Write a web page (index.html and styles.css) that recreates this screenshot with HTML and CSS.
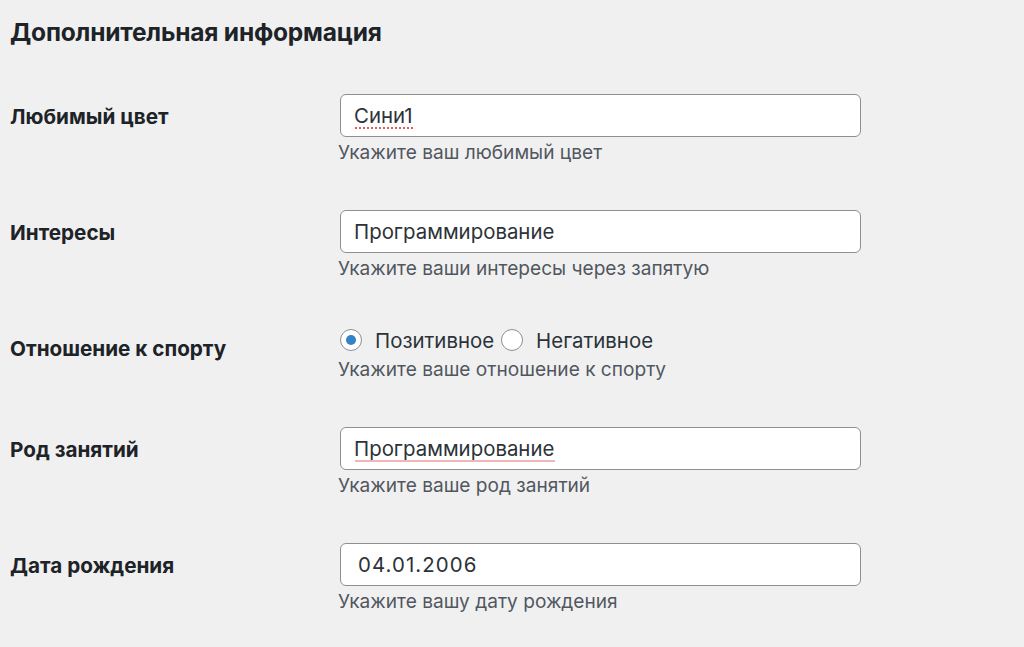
FILE: index.html
```html
<!DOCTYPE html>
<html lang="ru">
<head>
<meta charset="utf-8">
<title>Дополнительная информация</title>
<link rel="stylesheet" href="styles.css">
</head>
<body>
<h2 class="title">Дополнительная информация</h2>
<div class="form">
  <div class="row">
    <label class="label" for="color">Любимый цвет</label>
    <div class="field">
      <div class="input-wrap">
        <input class="text" id="color" type="text" value="Сини1">
        <span class="spell spell-dotted" aria-hidden="true">Сини1</span>
      </div>
      <p class="desc">Укажите ваш любимый цвет</p>
    </div>
  </div>
  <div class="row">
    <label class="label" for="interests">Интересы</label>
    <div class="field">
      <input class="text" id="interests" type="text" value="Программирование">
      <p class="desc">Укажите ваши интересы через запятую</p>
    </div>
  </div>
  <div class="row">
    <span class="label">Отношение к спорту</span>
    <div class="field">
      <div class="radios">
        <label class="radio"><input type="radio" name="sport" checked><span>Позитивное</span></label>
        <label class="radio"><input type="radio" name="sport"><span>Негативное</span></label>
      </div>
      <p class="desc">Укажите ваше отношение к спорту</p>
    </div>
  </div>
  <div class="row">
    <label class="label" for="job">Род занятий</label>
    <div class="field">
      <div class="input-wrap">
        <input class="text" id="job" type="text" value="Программирование">
        <span class="spell spell-soft" aria-hidden="true">Программирование</span>
      </div>
      <p class="desc">Укажите ваше род занятий</p>
    </div>
  </div>
  <div class="row">
    <label class="label" for="birth">Дата рождения</label>
    <div class="field">
      <input class="text date" id="birth" type="text" value="04.01.2006">
      <p class="desc">Укажите вашу дату рождения</p>
    </div>
  </div>
</div>
</body>
</html>
```

FILE: styles.css
```css
html, body {
  margin: 0;
  padding: 0;
  background: #f0f0f1;
}
body {
  font-family: Inter, "Noto Sans", "Liberation Sans", sans-serif;
  color: #1d2327;
  padding-left: 10px;
}
.title {
  margin: 0;
  padding-top: 17px;
  font-size: 24.5px;
  line-height: 30px;
  font-weight: 700;
  color: #1d2327;
  letter-spacing: -0.2px;
}
.form {
  display: flex;
  flex-direction: column;
  gap: 45px;
  padding-top: 47px;
}
.row {
  display: grid;
  grid-template-columns: 330px 521px;
}
.label {
  padding-top: 9px;
  font-size: 20.7px;
  line-height: 28px;
  font-weight: 700;
  color: #1d2327;
}
.field {
  display: flex;
  flex-direction: column;
}
.input-wrap {
  position: relative;
  height: 43px;
}
.text {
  box-sizing: border-box;
  width: 521px;
  height: 43px;
  margin: 0;
  padding: 0 13px;
  border: 1.5px solid #8c8f94;
  border-radius: 6px;
  background: #fff;
  font-family: inherit;
  font-size: 20.4px;
  color: #2c3338;
  outline: none;
}
.spell {
  position: absolute;
  left: 14.5px;
  top: 2px;
  line-height: 31px;
  font-size: 20.4px;
  color: transparent;
  pointer-events: none;
  white-space: nowrap;
  overflow: hidden;
}
.spell-dotted {
  border-bottom: 2px dotted #ea5a55;
}
.spell-soft {
  border-bottom: 2px solid #eeb6b6;
}
.date {
  padding-left: 17px;
  letter-spacing: 1.1px;
}
.desc {
  margin: 2px 0 0 -2px;
  font-size: 19.1px;
  line-height: 26px;
  color: #50575e;
}
.radios {
  display: flex;
  align-items: center;
  height: 28px;
  gap: 7px;
}
.radio {
  display: flex;
  align-items: center;
  gap: 13px;
  font-size: 20.4px;
  color: #2c3338;
}
.radio input {
  appearance: none;
  -webkit-appearance: none;
  box-sizing: border-box;
  width: 22px;
  height: 22px;
  margin: 0;
  border: 1.5px solid #8c8f94;
  border-radius: 50%;
  background: #fff;
  display: flex;
  align-items: center;
  justify-content: center;
}
.radio input:checked::before {
  content: "";
  width: 10px;
  height: 10px;
  border-radius: 50%;
  background: #3582c4;
}
```
